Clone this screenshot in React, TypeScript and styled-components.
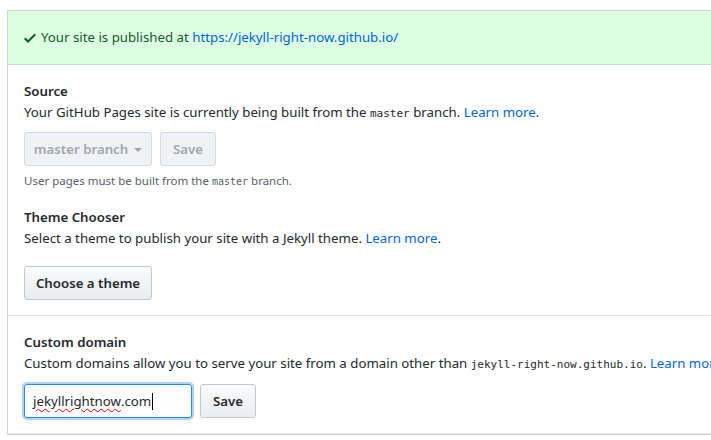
import React from "react";
import styled, { createGlobalStyle } from "styled-components";

const GlobalStyle = createGlobalStyle`
  html, body {
    margin: 0;
    padding: 0;
    background: #fff;
    overflow: hidden;
  }
  body {
    font-family: "Noto Sans", "Open Sans", sans-serif;
    font-size: 13.25px;
    line-height: 21px;
    color: #24292e;
  }
`;

const Page = styled.div`
  padding: 10px 0 0 7px;
`;

const Box = styled.div`
  width: 780px;
  border: 1px solid #d1d5da;
  border-right: none;
`;

const Flash = styled.div`
  display: flex;
  align-items: center;
  gap: 5px;
  height: 53px;
  padding: 0 16px;
  background: #dcffe4;
  color: #165c26;
  border-bottom: 1px solid #c6dbcb;
`;

const Section = styled.div`
  padding: 16px 16px 15px;
  border-bottom: 1px solid #e1e4e8;
`;

const Title = styled.h3`
  margin: 0;
  font-size: 13.25px;
  font-weight: 600;
  line-height: 21px;
`;

const Text = styled.p`
  margin: 0;
  line-height: 21px;
  white-space: nowrap;
`;

const Link = styled.a`
  color: #0366d6;
  text-decoration: none;
`;

const Code = styled.code`
  font-family: "DejaVu Sans Mono", "Liberation Mono", monospace;
  font-size: 11px;
`;

const Row = styled.div<{ $top: number }>`
  display: flex;
  align-items: center;
  gap: 8px;
  margin-top: ${(p) => p.$top}px;
`;

const Button = styled.button<{ $disabled?: boolean; $w?: number }>`
  box-sizing: border-box;
  display: inline-flex;
  align-items: center;
  justify-content: center;
  gap: 6px;
  height: 34px;
  width: ${(p) => (p.$w ? `${p.$w}px` : "auto")};
  padding: 0 10px;
  white-space: nowrap;
  font-family: inherit;
  font-size: 13.25px;
  font-weight: 600;
  border-radius: 3px;
  border: 1px solid ${(p) => (p.$disabled ? "#d6d9dc" : "#c4c7ca")};
  color: ${(p) => (p.$disabled ? "#a0a6ac" : "#24292e")};
  background: ${(p) =>
    p.$disabled ? "#eff3f6" : "linear-gradient(180deg, #fafbfc, #eaedf1 90%)"};
`;

const Caret = styled.span`
  width: 0;
  height: 0;
  border-left: 4px solid transparent;
  border-right: 4px solid transparent;
  border-top: 4px solid #a0a6ac;
  margin-top: 1px;
`;

const Note = styled.p`
  margin: 6px 0 0;
  font-size: 11.5px;
  line-height: 18px;
  color: #586069;
`;

const NoteCode = styled(Code)`
  font-size: 10px;
`;

const SectionGap = styled.div`
  height: 16px;
`;

const FakeInput = styled.div`
  box-sizing: border-box;
  display: flex;
  align-items: center;
  width: 168px;
  height: 34px;
  padding: 0 8px;
  border: 1px solid #2188ff;
  border-radius: 3px;
  box-shadow: 0 0 0 2px rgba(3, 102, 214, 0.3);
  font-size: 13.25px;
  color: #24292e;
`;

const Misspelled = styled.span`
  text-decoration: underline wavy #e00;
  text-decoration-thickness: 1px;
  text-underline-offset: 2px;
`;

const Cursor = styled.span`
  display: inline-block;
  width: 1px;
  height: 17px;
  background: #000;
  margin-left: 1px;
`;

const Check = () => (
  <svg width="12" height="16" viewBox="0 0 12 16" fill="#165c26">
    <path d="M12 5l-8 8-4-4 1.5-1.5L4 10l6.5-6.5L12 5z" />
  </svg>
);

export default function App() {
  return (
    <Page>
      <GlobalStyle />
      <Box>
        <Flash>
          <Check />
          <span>
            Your site is published at{" "}
            <Link href="#">https://jekyll-right-now.github.io/</Link>
          </span>
        </Flash>
        <Section>
          <Title>Source</Title>
          <Text>
            Your GitHub Pages site is currently being built from the <Code>master</Code> branch.{" "}
            <Link href="#">Learn more</Link>.
          </Text>
          <Row $top={8}>
            <Button $disabled $w={128}>
              master branch <Caret />
            </Button>
            <Button $disabled $w={56}>
              Save
            </Button>
          </Row>
          <Note>
            User pages must be built from the <NoteCode>master</NoteCode> branch.
          </Note>
          <SectionGap />
          <Title>Theme Chooser</Title>
          <Text>
            Select a theme to publish your site with a Jekyll theme.{" "}
            <Link href="#">Learn more</Link>.
          </Text>
          <Row $top={17}>
            <Button $w={128}>Choose a theme</Button>
          </Row>
        </Section>
        <Section>
          <Title>Custom domain</Title>
          <Text>
            Custom domains allow you to serve your site from a domain other than{" "}
            <Code>jekyll-right-now.github.io</Code>. <Link href="#">Learn more</Link>.
          </Text>
          <Row $top={9}>
            <FakeInput>
              <Misspelled>jekyllrightnow</Misspelled>.com
              <Cursor />
            </FakeInput>
            <Button $w={56}>Save</Button>
          </Row>
        </Section>
      </Box>
    </Page>
  );
}
